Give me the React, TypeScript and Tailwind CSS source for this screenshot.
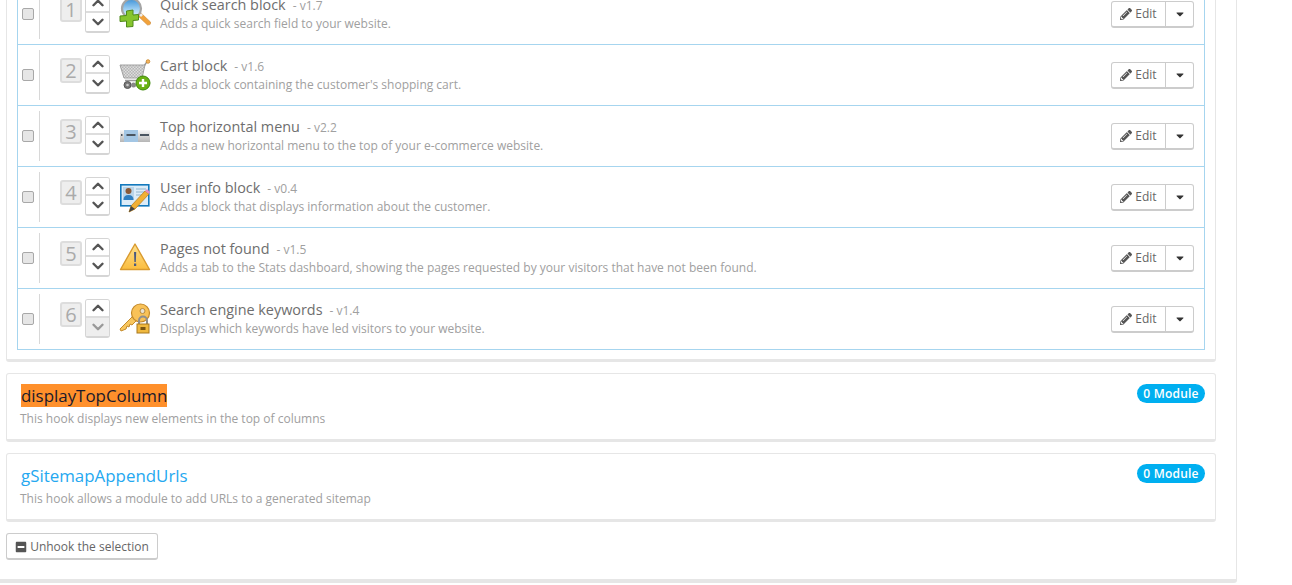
import React from 'react';
import { ChevronUp, ChevronDown } from 'lucide-react';
import { FaPencilAlt, FaCaretDown, FaMinusSquare } from 'react-icons/fa';

const SearchIcon = () => (
  <svg width="32" height="32" viewBox="0 0 32 32">
    <defs>
      <linearGradient id="lens" x1="0" y1="0" x2="0" y2="1">
        <stop offset="0" stopColor="#3f93d8" />
        <stop offset="0.6" stopColor="#a9d6f5" />
        <stop offset="1" stopColor="#eaf6fd" />
      </linearGradient>
    </defs>
    <path d="M19 18l3-3 9.500 9q1 3-3 3z" fill="#f2a23a" stroke="#c98a3a" strokeWidth=".6" />
    <path d="M20 17l2-2 2 2-2 2z" fill="#eee" />
    <circle cx="12.500" cy="10.500" r="9.500" fill="url(#lens)" stroke="#a5a5a5" strokeWidth="2.200" />
    <path d="M7.500 13l6.500-1v5l5.500-.5v5.500l-5.500 .5v6l-6.500 .5v-6l-6.500 .5v-5.500l6.500-.5z" fill="#86c52e" stroke="#4f8a1a" strokeWidth="1" />
  </svg>
);

const CartIcon = () => (
  <svg width="32" height="32" viewBox="0 0 32 32">
    <defs>
      <pattern id="cart-check" width="3" height="3" patternUnits="userSpaceOnUse">
        <rect width="3" height="3" fill="#b5b5b5" />
        <rect width="1.500" height="1.500" fill="#dedede" />
        <rect x="1.500" y="1.500" width="1.500" height="1.500" fill="#dedede" />
      </pattern>
    </defs>
    <path d="M25 7l3.500-5" fill="none" stroke="#9a9a9a" strokeWidth="1.400" />
    <path d="M1 6h25l-3 13H5z" fill="url(#cart-check)" stroke="#a0a0a0" strokeWidth="1" />
    <path d="M6 21.500h14" stroke="#999" strokeWidth="1.500" />
    <circle cx="8.500" cy="26" r="3.500" fill="#777" stroke="#555" />
    <circle cx="8.500" cy="26" r="1.300" fill="#ccc" />
    <circle cx="14.500" cy="26" r="2.500" fill="#888" />
    <circle cx="29" cy="2.500" r="1.800" fill="#f3b562" stroke="#c8862a" strokeWidth=".8" />
    <circle cx="24" cy="24" r="7" fill="#6ab214" stroke="#3f8a0a" />
    <path d="M24 20v8M20 24h8" stroke="#fff" strokeWidth="2.400" />
  </svg>
);

const MenuIcon = () => (
  <svg width="32" height="32" viewBox="0 0 32 32">
    <defs>
      <linearGradient id="menu-bar" x1="0" y1="0" x2="0" y2="1">
        <stop offset="0" stopColor="#f8f8f8" />
        <stop offset="1" stopColor="#b5b5b5" />
      </linearGradient>
    </defs>
    <rect x="1" y="10" width="30" height="12" fill="url(#menu-bar)" />
    <rect x="5" y="10" width="14" height="12" fill="#a3c6e4" />
    <path d="M2 15h1.500M7.500 15h9M21 15h9" stroke="#4a5560" strokeWidth="1.800" />
  </svg>
);

const UserInfoIcon = () => (
  <svg width="32" height="32" viewBox="0 0 32 32">
    <rect x="1.800" y="3.800" width="28" height="21" fill="#dcecf8" stroke="#1379bd" strokeWidth="1.600" />
    <rect x="4" y="6" width="11" height="13" fill="#b9d5ea" />
    <circle cx="9.500" cy="10" r="3" fill="#8a5a36" />
    <path d="M4.500 19q0-5 5-5t5 5z" fill="#2f7fc0" />
    <path d="M17 8h10M17 11h10M17 14h6" stroke="#8fb3cc" strokeWidth="1.200" />
    <path d="M10 31l2-6 14-15 4 3-14 15z" fill="#f1b035" stroke="#b9801f" strokeWidth=".8" />
    <path d="M26 10l2-2 3 3-1 2z" fill="#e58bc0" />
    <path d="M10 31l2-6 4 3z" fill="#444" />
  </svg>
);

const WarningIcon = () => (
  <svg width="32" height="32" viewBox="0 0 32 32">
    <defs>
      <linearGradient id="warn-fill" x1="0" y1="0" x2="0" y2="1">
        <stop offset="0" stopColor="#fde08e" />
        <stop offset="1" stopColor="#fbbd3e" />
      </linearGradient>
    </defs>
    <path d="M16 2L30.500 27.500H1.500z" fill="url(#warn-fill)" stroke="#d99a2e" strokeWidth="1.400" strokeLinejoin="round" />
    <path d="M15 10h2.200l-.4 10h-1.400z" fill="#4a5a80" />
    <rect x="15" y="21.500" width="2.200" height="2.500" fill="#4a5a80" />
  </svg>
);

const KeyIcon = () => (
  <svg width="32" height="32" viewBox="0 0 32 32">
    <path d="M1 26L15 12l4 4-6 6-2-1-1 3-2-1-1 3-5 2z" fill="#f8c65e" stroke="#c48a2a" strokeWidth="1" />
    <circle cx="21.500" cy="10" r="9" fill="#f9c258" stroke="#c48a2a" strokeWidth="1.200" />
    <circle cx="23.500" cy="8" r="2.500" fill="#e9e1d0" stroke="#b98a3a" />
    <path d="M20 21v-3.500a4 4 0 0 1 8 0V21" fill="none" stroke="#8f8f8f" strokeWidth="2" />
    <rect x="18" y="21" width="12" height="9" fill="#f0b93f" stroke="#a9791f" />
    <rect x="21.500" y="24" width="5" height="3" fill="#7a5512" />
  </svg>
);

const modules = [
  { name: 'Quick search block', version: 'v1.7', desc: 'Adds a quick search field to your website.', icon: <SearchIcon /> },
  { name: 'Cart block', version: 'v1.6', desc: "Adds a block containing the customer's shopping cart.", icon: <CartIcon /> },
  { name: 'Top horizontal menu', version: 'v2.2', desc: 'Adds a new horizontal menu to the top of your e-commerce website.', icon: <MenuIcon /> },
  { name: 'User info block', version: 'v0.4', desc: 'Adds a block that displays information about the customer.', icon: <UserInfoIcon /> },
  { name: 'Pages not found', version: 'v1.5', desc: 'Adds a tab to the Stats dashboard, showing the pages requested by your visitors that have not been found.', icon: <WarningIcon /> },
  { name: 'Search engine keywords', version: 'v1.4', desc: 'Displays which keywords have led visitors to your website.', icon: <KeyIcon /> },
];

function ModuleRow({ index, name, version, desc, icon, last }: { index: number; name: string; version: string; desc: string; icon: React.ReactNode; last: boolean }) {
  return (
    <li className={`flex items-center pb-px pl-[4px] pr-[10px] ${last ? 'h-[60px]' : 'h-[61px] border-b border-[#a6d5ef]'}`}>
      <input type="checkbox" className="h-[12px] w-[12px] appearance-none rounded-[2px] border border-[#a8a8a8] bg-[#e6e6e6]" />
      <div className="ml-[5px] h-[50px] w-px bg-[#d8d8d8]" />
      <div className="mb-[8px] ml-[20px] flex h-[25px] w-[22px] items-center justify-center rounded-[3px] border-2 border-[#dddddd] bg-[#eeeeee] text-[20px] text-[#aaaaaa]">
        {index}
      </div>
      <div className="ml-[3px] flex w-[25px] flex-col overflow-hidden rounded-[3px] border border-[#d5d5d5] border-b-2">
        <button className="flex h-[18px] items-center justify-center border-b-2 border-[#dddddd] bg-white text-[#555555]">
          <ChevronUp size={18} strokeWidth={3.200} />
        </button>
        <button className={`flex h-[18px] items-center justify-center ${last ? 'bg-[#eeeeee] text-[#999999]' : 'bg-white text-[#555555]'}`}>
          <ChevronDown size={18} strokeWidth={3.200} />
        </button>
      </div>
      <div className="ml-[9px] h-[32px] w-[32px] shrink-0">{icon}</div>
      <div className="ml-[9px] mt-[2px] min-w-0 flex-1">
        <div className="flex items-baseline text-[14.400px] leading-[18px] text-[#6e6e6e]">
          {name}
          <span className="ml-[7px] text-[12px] text-[#a0a0a0]">- {version}</span>
        </div>
        <p className="text-[12px] leading-[18px] text-[#a0a0a0]">{desc}</p>
      </div>
      <div className="mt-px flex h-[27px] w-[83px] rounded-[3px] border border-[#cccccc] border-b-2 bg-white text-[12px] text-[#666666]">
        <button className="flex w-[54px] items-center justify-center gap-[3px] border-r border-[#cccccc]">
          <FaPencilAlt size={12} className="text-[#555555]" />
          Edit
        </button>
        <button className="flex flex-1 items-center justify-center text-[#333333]">
          <FaCaretDown size={12} />
        </button>
      </div>
    </li>
  );
}

function HookPanel({ title, desc, highlight }: { title: string; desc: string; highlight?: boolean }) {
  return (
    <section className="mt-[11px] flex h-[69px] items-start justify-between rounded-[3px] border border-[#e6e6e6] border-b-[3px] bg-white pl-[14px] pr-[10px] pt-[10px]">
      <div>
        <h3 className="text-[16.900px] leading-[23px]">
          {highlight ? <span className="bg-[#ff902b] text-[#1a1a2a]">{title}</span> : <span className="text-[#25a8f0]">{title}</span>}
        </h3>
        <p className="mt-[3px] -ml-px text-[12px] leading-[18px] text-[#a0a0a0]">{desc}</p>
      </div>
      <span className="flex h-[19px] w-[68px] items-center justify-center rounded-full bg-[#00aff0] text-[12px] font-semibold tracking-[0.2px] text-white">0 Module</span>
    </section>
  );
}

export default function App() {
  return (
    <div className="h-[585px] w-[1292px] overflow-hidden bg-white font-['Open_Sans',sans-serif]">
      <div className="-mt-[21px] ml-[-13px] h-[604px] w-[1250px] rounded-[3px] border border-[#e6e6e6] border-b-[4px] bg-white pl-[18px] pr-[20px]">
        <section className="h-[382px] rounded-[3px] border border-[#e6e6e6] border-b-[3px] bg-white px-[10px] pt-[2px]">
          <ul className="border border-[#a6d5ef] bg-white">
            {modules.map((m, i) => (
              <ModuleRow key={m.name} index={i + 1} {...m} last={i === modules.length - 1} />
            ))}
          </ul>
        </section>
        <HookPanel title="displayTopColumn" desc="This hook displays new elements in the top of columns" highlight />
        <HookPanel title="gSitemapAppendUrls" desc="This hook allows a module to add URLs to a generated sitemap" />
        <button className="mt-[11px] flex h-[27px] w-[152px] items-center justify-center gap-[3px] rounded-[3px] border border-[#cccccc] border-b-2 bg-white pt-px text-[12px] text-[#666666]">
          <FaMinusSquare size={12} className="text-[#555555]" />
          Unhook the selection
        </button>
      </div>
    </div>
  );
}
